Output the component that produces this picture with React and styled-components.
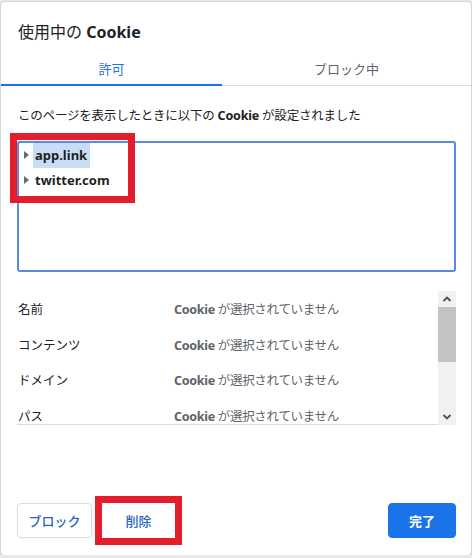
import React from 'react';
import styled, {createGlobalStyle} from 'styled-components';

const colors = {
  text: '#202124',
  grey: '#5f6368',
  line: '#dadce0',
  blue: '#1a73e8',
  focus: '#5b8bd9',
  select: '#c9dcf5',
  mark: '#e31d2b',
};

const Global = createGlobalStyle`
  html, body {
    margin: 0;
    background: #e9e9e9;
  }
  body {
    font-family: "Noto Sans", "Noto Sans CJK JP", sans-serif;
    color: ${colors.text};
  }
`;

const Dialog = styled.div`
  box-sizing: border-box;
  margin: 2px 0 0 1px;
  width: 470px;
  height: 553px;
  background: #fff;
  border-radius: 4px;
  box-shadow: 0 0 0 1px #d6d6d6, 0 1px 3px rgba(0, 0, 0, 0.2);
  display: flex;
  flex-direction: column;
`;

const Title = styled.h1`
  margin: 18px 0 0 17px;
  font-size: 16px;
  line-height: 24px;
  font-weight: 400;

  b {
    font-weight: 700;
  }
`;

const TabList = styled.div`
  display: flex;
  border-bottom: 1px solid ${colors.line};
`;

const Tab = styled.div`
  flex: ${p => (p.$active ? '0 0 221px' : '1')};
  text-align: center;
  font-size: 13px;
  line-height: 20px;
  padding: 15px 0 5px;
  margin-bottom: -1px;
  color: ${p => (p.$active ? colors.blue : colors.grey)};
  border-bottom: 2px solid ${p => (p.$active ? colors.blue : 'transparent')};
`;

const Body = styled.div`
  padding: 0 15px 0 16px;
`;

const Desc = styled.p`
  margin: 20px 0 0 1px;
  font-size: 12.5px;
  line-height: 20px;
  letter-spacing: -0.2px;

  b {
    font-weight: 700;
  }
`;

const TreeWrap = styled.div`
  position: relative;
  margin-top: 15px;
`;

const Tree = styled.div`
  box-sizing: border-box;
  height: 131px;
  border: 2px solid ${colors.focus};
  border-radius: 3px;
  padding: 0 4px;
`;

const Node = styled.div`
  display: flex;
  align-items: center;
  height: 25px;
  font-size: 13px;
  font-weight: 700;
  color: #1f1f1f;
`;

const Caret = styled.span`
  width: 0;
  height: 0;
  border-top: 4px solid transparent;
  border-bottom: 4px solid transparent;
  border-left: 5px solid #6b6b6b;
  margin: 0 4px 2px 1px;
`;

const Label = styled.span`
  padding: 0 3px 0 2px;
  line-height: 25px;
  background: ${p => (p.$selected ? colors.select : 'transparent')};
`;

const Mark = styled.div`
  position: absolute;
  box-sizing: border-box;
  left: -7px;
  top: -8px;
  width: 125px;
  height: 70px;
  border: 7px solid ${colors.mark};
  pointer-events: none;
`;

const Details = styled.div`
  display: flex;
  margin-top: 19px;
  height: 134px;
`;

const Rows = styled.div`
  flex: 1;
  overflow: hidden;
  border-bottom: 1px solid ${colors.line};
`;

const Row = styled.div`
  display: flex;
  align-items: center;
  height: 35.5px;
  font-size: 12.5px;
`;

const Key = styled.span`
  width: 156px;
  flex: none;
  padding-left: 1px;
`;

const Value = styled.span`
  color: ${colors.grey};
  letter-spacing: -0.3px;

  b {
    font-weight: 700;
  }
`;

const Scrollbar = styled.div`
  width: 18px;
  background: #f1f1f1;
  display: flex;
  flex-direction: column;
  align-items: center;
`;

const Arrow = styled.svg`
  flex: none;
  width: 18px;
  height: 16px;
`;

const Thumb = styled.div`
  width: 18px;
  height: 55px;
  background: #c4c4c4;
`;

const Track = styled.div`
  flex: 1;
`;

const Footer = styled.div`
  margin-top: auto;
  display: flex;
  align-items: center;
  gap: 3px;
  padding: 0 15px 10px 16px;
`;

const Button = styled.button`
  box-sizing: border-box;
  height: 35px;
  width: ${p => p.$w}px;
  padding: 0;
  border-radius: 4px;
  border: 1px solid ${p => (p.$primary ? colors.blue : p.$bare ? 'transparent' : colors.line)};
  background: ${p => (p.$primary ? colors.blue : '#fff')};
  color: ${p => (p.$primary ? '#fff' : '#2b63c4')};
  font-family: inherit;
  font-size: 13px;
  font-weight: ${p => (p.$primary ? 700 : 500)};
`;

const Outline = styled.div`
  display: flex;
  border: 7px solid ${colors.mark};
`;

const Spacer = styled.div`
  flex: 1;
`;

const fields = ['名前', 'コンテンツ', 'ドメイン', 'パス'];

export default function App() {
  return (
    <>
      <Global />
      <Dialog>
        <Title>
          使用中の <b>Cookie</b>
        </Title>
        <TabList>
          <Tab $active>許可</Tab>
          <Tab>ブロック中</Tab>
        </TabList>
        <Body>
          <Desc>
            このページを表示したときに以下の <b>Cookie</b> が設定されました
          </Desc>
          <TreeWrap>
            <Tree>
              <Node>
                <Caret />
                <Label $selected>app.link</Label>
              </Node>
              <Node>
                <Caret />
                <Label>twitter.com</Label>
              </Node>
            </Tree>
            <Mark />
          </TreeWrap>
          <Details>
            <Rows>
              {fields.map(f => (
                <Row key={f}>
                  <Key>{f}</Key>
                  <Value>
                    <b>Cookie</b> が選択されていません
                  </Value>
                </Row>
              ))}
            </Rows>
            <Scrollbar>
              <Arrow viewBox="0 0 18 16">
                <path d="M5.5 10 L9 6.5 L12.5 10" fill="none" stroke="#505050" strokeWidth="1.8" />
              </Arrow>
              <Thumb />
              <Track />
              <Arrow viewBox="0 0 18 16">
                <path d="M5.5 6 L9 9.5 L12.5 6" fill="none" stroke="#505050" strokeWidth="1.8" />
              </Arrow>
            </Scrollbar>
          </Details>
        </Body>
        <Footer>
          <Button $w={75}>ブロック</Button>
          <Outline>
            <Button $bare $w={73}>
              削除
            </Button>
          </Outline>
          <Spacer />
          <Button $primary $w={68}>
            完了
          </Button>
        </Footer>
      </Dialog>
    </>
  );
}
